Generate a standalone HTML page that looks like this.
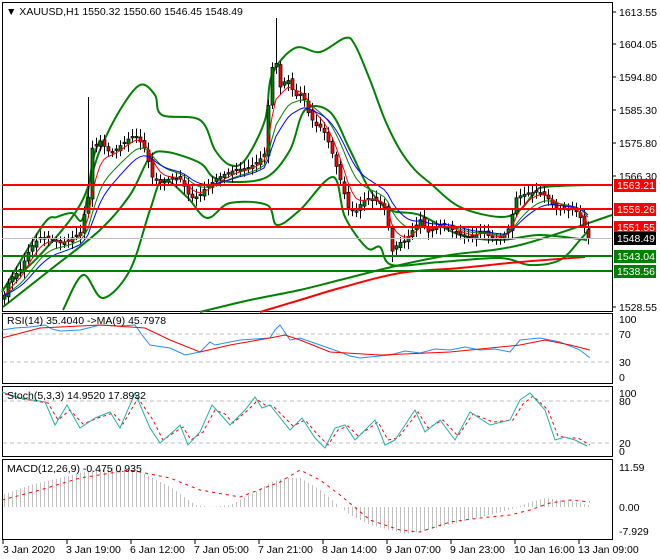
<!DOCTYPE html>
<html><head><meta charset="utf-8"><style>
html,body{margin:0;padding:0;background:#fff;}
body{width:660px;height:560px;overflow:hidden;position:relative;font-family:"Liberation Sans",sans-serif;}
svg{position:absolute;left:0;top:0;}
text{font-family:"Liberation Sans",sans-serif;font-size:10.5px;}
</style></head><body>
<svg id="s" width="660" height="560" viewBox="0 0 660 560">
<rect width="660" height="560" fill="#fff"/>
<g fill="none" stroke="#000" stroke-width="1">
<rect x="2.5" y="2.5" width="610" height="309"/>
<rect x="2.5" y="313.5" width="610" height="70"/>
<rect x="2.5" y="386.5" width="610" height="70"/>
<rect x="2.5" y="459.5" width="610" height="80"/>
</g>
<g id="bands" fill="none" stroke-linejoin="round">
<polyline stroke="#008000" stroke-width="2" points="2,290 40,255 80,205 100,150 120,110 140,85 155,95 162,115 200,120 215,150 230,165 245,160 265,120 272,75 295,48 320,52 345,38 355,45 370,80 385,120 400,150 415,170 430,183 460,207 500,217 520,210 535,192 545,187 587,185"/>
<polyline stroke="#008000" stroke-width="2" points="2,292 43,225 57,217 72,213 83,218 93,160 100,140"/>
<polyline stroke="#008000" stroke-width="2" points="63,310 83,275 103,298 130,270 150,210 163,180 187,197 207,218 230,203 267,205 277,225 300,210 333,177 345,217 367,248 380,247 392,265 440,262 500,258 530,265 560,260 580,240 590,228"/>
<polyline stroke="#008000" stroke-width="2" points="3,307 50,270 100,230 130,195 150,157 167,152 200,163 213,177 233,182 267,177 290,150 305,110 330,112 350,150 370,190 390,210 420,215 460,235 500,240 540,235 587,240"/>
<polyline stroke="#008000" stroke-width="2" points="200,312 250,300 300,290 340,280 400,265 450,255 520,245 612,215"/>
<polyline stroke="#f00" stroke-width="2" points="260,312 300,300 340,288 400,273 460,268 520,262 585,257"/>
</g>
<g id="cand"></g>
<g id="mas" fill="none"></g>
<line x1="2" y1="238.5" x2="612" y2="238.5" stroke="#c0c0c0"/>
<g stroke-width="2">
<line x1="2" y1="185" x2="612" y2="185" stroke="#f00"/>
<line x1="2" y1="209" x2="612" y2="209" stroke="#f00"/>
<line x1="2" y1="227" x2="612" y2="227" stroke="#f00"/>
<line x1="2" y1="256" x2="612" y2="256" stroke="#008000"/>
<line x1="2" y1="271" x2="612" y2="271" stroke="#008000"/>
</g>
<text x="6" y="15" font-size="11">▼ XAUUSD,H1  1550.32 1550.60 1546.45 1548.49</text>
<g font-size="10.5">
<g stroke="#000"><line x1="612" y1="12" x2="616" y2="12"/><line x1="612" y1="44" x2="616" y2="44"/><line x1="612" y1="77" x2="616" y2="77"/><line x1="612" y1="110" x2="616" y2="110"/><line x1="612" y1="143" x2="616" y2="143"/><line x1="612" y1="176" x2="616" y2="176"/><line x1="612" y1="307" x2="616" y2="307"/></g>
<text x="619" y="16">1613.55</text><text x="619" y="48">1604.05</text><text x="619" y="81">1594.80</text><text x="619" y="114">1585.30</text><text x="619" y="147">1575.80</text><text x="619" y="180">1566.30</text><text x="619" y="311">1528.55</text>
<rect x="614" y="179" width="42" height="13" fill="#f00"/><text x="617" y="189" fill="#fff">1563.21</text>
<rect x="614" y="203" width="42" height="13" fill="#f00"/><text x="617" y="213" fill="#fff">1556.26</text>
<rect x="614" y="221" width="42" height="13" fill="#f00"/><text x="617" y="231" fill="#fff">1551.55</text>
<rect x="614" y="232" width="42" height="13" fill="#000"/><text x="617" y="242" fill="#fff">1548.49</text>
<rect x="614" y="250" width="42" height="13" fill="#008000"/><text x="617" y="260" fill="#fff">1543.04</text>
<rect x="614" y="265" width="42" height="13" fill="#008000"/><text x="617" y="275" fill="#fff">1538.56</text>
</g>
<g stroke="#c0c0c0" stroke-dasharray="4,3"><line x1="3" y1="334" x2="612" y2="334"/><line x1="3" y1="362" x2="612" y2="362"/>
<line x1="3" y1="401" x2="612" y2="401"/><line x1="3" y1="443" x2="612" y2="443"/></g>
<polyline fill="none" stroke="#1e90ff" points="2,330 15,328 30,327 45,325 52,329 60,331 80,330 100,325 120,326 135,325 142,335 150,345 170,348 185,355 200,352 210,342 215,345 240,340 270,338 275,330 280,325 290,340 300,338 320,345 340,352 350,356 360,358 390,355 405,351 420,353 435,349 450,350 465,347 480,350 495,349 510,352 520,340 540,338 560,342 580,350 590,358"/>
<polyline fill="none" stroke="#f00" points="2,338 40,328 100,325 145,328 170,340 200,352 230,345 270,338 285,335 300,340 330,352 380,355 450,352 520,345 545,340 570,345 590,350"/>
<text x="7" y="324">RSI(14) 35.4040   -&gt;MA(9) 45.7978</text>
<text x="619" y="323">100</text><text x="619" y="338">70</text><text x="619" y="366">30</text><text x="619" y="381">0</text>
<polyline fill="none" stroke="#f00" stroke-dasharray="3,3" points="5,394 23,399 48,403 58,420 70,410 83,424 98,418 113,413 123,424 138,398 153,420 163,440 178,430 183,427 191,440 203,432 215,410 225,414 233,423 248,410 258,400 265,405 273,406 293,426 305,420 318,435 328,445 338,430 348,426 358,436 378,422 388,440 398,438 418,412 428,428 443,420 458,436 473,414 493,422 513,420 523,404 533,396 548,410 558,436 568,438 578,438 590,445"/>
<polyline fill="none" stroke="#20b2aa" points="2,392 20,398 45,402 55,425 67,405 80,428 95,418 110,412 120,428 135,393 150,428 160,443 175,430 180,425 188,445 200,432 212,405 222,416 230,425 245,410 255,397 262,408 270,405 290,430 302,418 315,438 325,448 335,428 345,425 355,440 375,420 385,445 395,440 415,410 425,432 440,420 455,440 470,412 490,425 510,420 520,400 530,393 545,410 555,440 565,437 575,440 587,446"/>
<text x="7" y="399">Stoch(5,3,3) 14.9520 17.8932</text>
<text x="619" y="397">100</text><text x="619" y="405">80</text><text x="619" y="447">20</text><text x="619" y="455">0</text>
<g id="macd"></g>
<polyline fill="none" stroke="#f00" stroke-dasharray="3,4" points="2,500 40,490 80,478 130,470 170,478 200,490 240,497 280,482 300,470 320,480 340,495 370,520 400,530 420,532 450,522 480,518 510,515 530,510 550,503 570,500 590,502"/>
<text x="7" y="472">MACD(12,26,9) -0.475 0.935</text>
<text x="619" y="471">11.59</text><text x="619" y="511">0.00</text><text x="619" y="535">-7.929</text>
<g stroke="#000"><line x1="3" y1="540" x2="3" y2="544"/><line x1="67" y1="540" x2="67" y2="544"/><line x1="131" y1="540" x2="131" y2="544"/><line x1="195" y1="540" x2="195" y2="544"/><line x1="259" y1="540" x2="259" y2="544"/><line x1="323" y1="540" x2="323" y2="544"/><line x1="387" y1="540" x2="387" y2="544"/><line x1="451" y1="540" x2="451" y2="544"/><line x1="515" y1="540" x2="515" y2="544"/><line x1="579" y1="540" x2="579" y2="544"/></g>
<g font-size="10.5">
<text x="3" y="553">3 Jan 2020</text><text x="66" y="553">3 Jan 19:00</text><text x="130" y="553">6 Jan 12:00</text><text x="194" y="553">7 Jan 05:00</text><text x="258" y="553">7 Jan 21:00</text><text x="322" y="553">8 Jan 14:00</text><text x="386" y="553">9 Jan 07:00</text><text x="450" y="553">9 Jan 23:00</text><text x="514" y="553">10 Jan 16:00</text><text x="578" y="553">13 Jan 09:00</text>
</g>
</svg>
<script>
(function(){
var NS="http://www.w3.org/2000/svg";
function interp(k,x){for(var i=1;i<k.length;i++){if(x<=k[i][0]){var a=k[i-1],b=k[i];return a[1]+(b[1]-a[1])*(x-a[0])/(b[0]-a[0]);}}return k[k.length-1][1];}
function el(t,at,p){var e=document.createElementNS(NS,t);for(var k in at)e.setAttribute(k,at[k]);p.appendChild(e);return e;}
// smooth band polylines
var pls=document.querySelectorAll('#bands polyline');
for(var j=0;j<pls.length;j++){
 var pl=pls[j],pts=pl.getAttribute('points').trim().split(/\s+/).map(function(s){return s.split(',').map(Number);});
 var d='M'+pts[0][0]+','+pts[0][1];
 for(var i=0;i<pts.length-1;i++){
  var p0=pts[i-1]||pts[i],p1=pts[i],p2=pts[i+1],p3=pts[i+2]||p2;
  d+=' C'+(p1[0]+(p2[0]-p0[0])/6)+','+(p1[1]+(p2[1]-p0[1])/6)+' '+(p2[0]-(p3[0]-p1[0])/6)+','+(p2[1]-(p3[1]-p1[1])/6)+' '+p2[0]+','+p2[1];
 }
 var e=el('path',{d:d,stroke:pl.getAttribute('stroke'),'stroke-width':2,fill:'none'},pl.parentNode);
 pl.parentNode.removeChild(pl);
}
var P=[[2,300],[10,275],[20,268],[30,250],[40,240],[50,238],[60,240],[70,238],[80,235],[88,200],[92,150],[100,140],[110,150],[120,145],[135,138],[145,150],[152,175],[160,180],[170,178],[180,182],[190,200],[198,195],[205,185],[215,178],[230,175],[245,168],[258,158],[265,152],[270,75],[275,60],[280,90],[287,80],[295,95],[302,90],[308,110],[315,125],[322,130],[330,150],[340,180],[348,205],[355,210],[362,200],[370,200],[378,205],[385,210],[392,250],[398,240],[405,238],[412,230],[420,222],[428,235],[435,228],[442,222],[450,225],[458,232],[466,238],[474,240],[482,232],[490,236],[498,235],[505,232],[510,225],[515,200],[522,198],[530,195],[538,190],[546,193],[554,205],[562,210],[570,212],[578,215],[583,225],[588,237]];
var g=document.getElementById('cand'),prev=interp(P,2),xs=[],cs=[];
for(var x=4;x<=588;x+=4){
 var c=interp(P,x)+Math.sin(x*1.7)*3,o=prev+Math.sin(x*0.9)*2;
 var hi=Math.min(o,c)-3-Math.abs(Math.sin(x*2.3))*5,lo=Math.max(o,c)+3+Math.abs(Math.cos(x*1.3))*5;
 if(x==88)hi=97;if(x==276)hi=18;if(x==392)lo=262;
 el('line',{x1:x+.5,y1:hi,x2:x+.5,y2:lo,stroke:'#000'},g);
 var t=Math.min(o,c),h=Math.max(1.5,Math.abs(o-c));
 el('rect',{x:x-1,y:t,width:3,height:h,fill:c<o?'#008000':'#f00',stroke:'#000','stroke-width':.7},g);
 xs.push(x);cs.push(c);prev=c;
}
function ema(a,n){var k=2/(n+1),r=[a[0]];for(var i=1;i<a.length;i++)r.push(r[i-1]+k*(a[i]-r[i-1]));return r;}
var m=document.getElementById('mas');
function line(arr,col,w){var s='';for(var i=0;i<arr.length;i++)s+=xs[i]+','+arr[i].toFixed(1)+' ';el('polyline',{points:s,stroke:col,'stroke-width':w,fill:'none'},m);}
line(ema(cs,10),'#008000',1);line(ema(cs,5),'#f00',1);line(ema(cs,14),'#00f',1);
var M=[[2,495],[30,485],[60,478],[90,470],[115,467],[140,472],[170,487],[195,505],[210,507],[230,505],[255,492],[270,482],[285,478],[300,478],[320,490],[335,503],[350,515],[370,525],[390,530],[405,534],[420,532],[440,527],[460,522],[480,517],[500,512],[515,508],[530,502],[545,498],[560,500],[575,502],[588,505]];
var mg=document.getElementById('macd');
for(var x=4;x<=588;x+=4){var v=interp(M,x);el('line',{x1:x+.5,y1:507,x2:x+.5,y2:v,stroke:'#c0c0c0'},mg);}
})();
</script>
</body></html>
